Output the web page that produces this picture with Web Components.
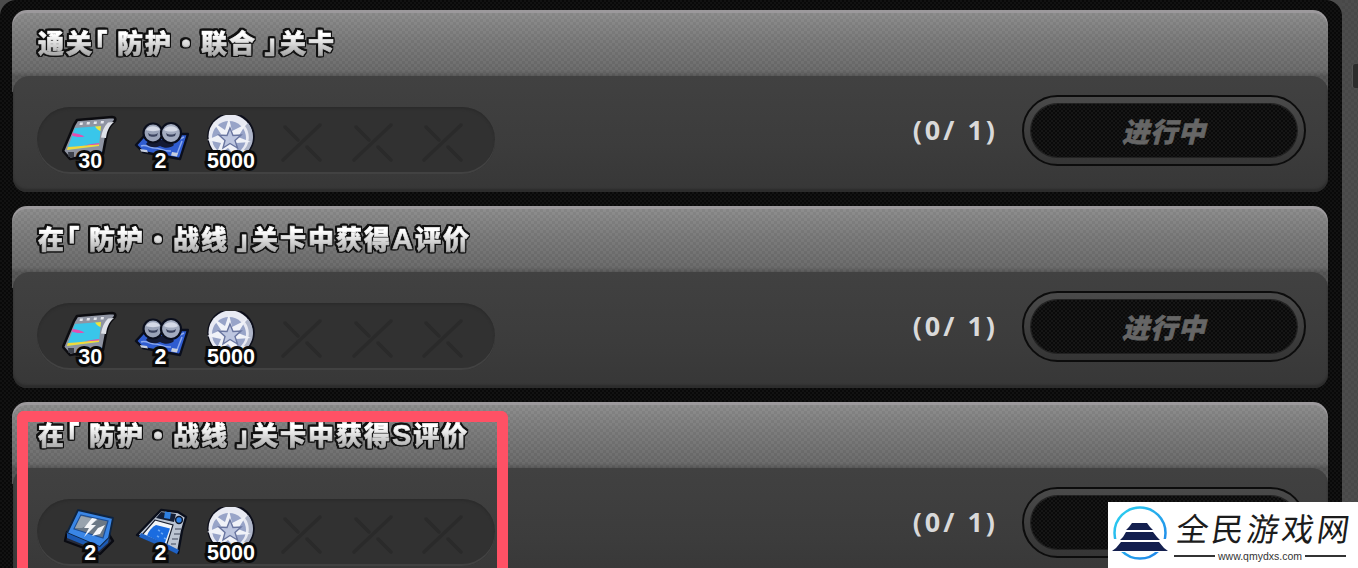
<!DOCTYPE html>
<html lang="zh">
<head>
<meta charset="utf-8">
<title>任务</title>
<style>
    html, body { margin: 0; height: 568px; overflow: hidden; background: #4b4b4b; }
    body { display: flex; font-family: "Noto Sans CJK SC", "Noto Sans", sans-serif; position: relative; }
</style>
</head>
<body>
<quest-panel>
    <quest-card progress="(0/ 1)" label="进行中">
        <span slot="title">通关「 防护・联合 」关卡</span>
        <reward-item kind="film" count="30"></reward-item>
        <reward-item kind="reel" count="2"></reward-item>
        <reward-item kind="coin" count="5000"></reward-item>
    </quest-card>
    <quest-card progress="(0/ 1)" label="进行中">
        <span slot="title">在「 防护・战线 」关卡中获得A评价</span>
        <reward-item kind="film" count="30"></reward-item>
        <reward-item kind="reel" count="2"></reward-item>
        <reward-item kind="coin" count="5000"></reward-item>
    </quest-card>
    <quest-card progress="(0/ 1)" label="进行中">
        <span slot="title">在「 防护・战线 」关卡中获得S评价</span>
        <reward-item kind="chip" count="2"></reward-item>
        <reward-item kind="device" count="2"></reward-item>
        <reward-item kind="coin" count="5000"></reward-item>
    </quest-card>
</quest-panel>
<panel-scroll></panel-scroll>
<mark-box></mark-box>
<site-badge></site-badge>

<script>
const CHECKER = 'repeating-conic-gradient(rgba(0,0,0,.045) 0 25%, rgba(255,255,255,.02) 0 50%) 0 0 / 6px 6px';

class QuestPanel extends HTMLElement {
    constructor() {
        super();
        this.attachShadow({ mode: 'open' });
        this.shadowRoot.innerHTML = `
        <style>
            :host {
                display: flex;
                flex-direction: column;
                gap: 14px;
                box-sizing: border-box;
                width: 1342px;
                height: 568px;
                padding: 10px 14px 0 12px;
                background: repeating-conic-gradient(#090909 0 25%, #121212 0 50%) 0 0 / 4px 4px;
                border-radius: 16px 16px 0 0;
                overflow: hidden;
            }
        </style>
        <slot></slot>`;
    }
}

class PanelScroll extends HTMLElement {
    constructor() {
        super();
        this.attachShadow({ mode: 'open' });
        this.shadowRoot.innerHTML = `
        <style>
            :host {
                display: block;
                flex: 1;
                padding: 64px 0 0 11px;
                background: repeating-conic-gradient(#4d4d4d 0 25%, #484848 0 50%) 0 0 / 6px 6px;
            }
            .thumb {
                height: 24px;
                background: #2c2c2c;
                border-radius: 2px 0 0 2px;
                box-shadow: -1px 0 0 #555;
            }
        </style>
        <div class="thumb"></div>`;
    }
}

class QuestCard extends HTMLElement {
    constructor() {
        super();
        this.attachShadow({ mode: 'open' });
    }

    connectedCallback() {
        const titleText = this.querySelector('[slot=title]').textContent;
        const titleHtml = titleText
            .replace('・', '<span class="dot">・</span>')
            .replace(/[A-Z]/, '<span class="latin">$&</span>');
        const empties = 6 - this.querySelectorAll('reward-item').length;
        const crosses = Array.from({ length: empties }, () => `
            <svg class="cross" width="70" height="54" viewBox="0 0 70 54" fill="none" stroke="#2a2a2a" stroke-width="3.4" stroke-linecap="round">
                <path d="M54 11 17 46"/>
                <path d="M19 13 32 26M41 33 54 46"/>
            </svg>`).join('');

        this.shadowRoot.innerHTML = `
        <style>
            :host {
                display: block;
                flex: none;
                height: 182px;
            }
            .head {
                height: 82px;
                box-sizing: border-box;
                padding: 17px 0 0 26px;
                border-radius: 15px 15px 0 0;
                background: ${CHECKER}, linear-gradient(#8e8e8e, #7a7a7a 35%, #6a6a6a 74%, #555 81%);
                box-shadow: inset 0 3px 0 #9c999c;
                font-size: 26px;
                font-weight: 900;
                line-height: 30px;
                letter-spacing: 2px;
                font-feature-settings: "palt";
            }
            .title {
                display: inline-block;
                white-space: pre;
                color: transparent;
                -webkit-text-stroke: .7px transparent;
                background: linear-gradient(#ffffff 25%, #d4d4d4 60%, #adadad 90%);
                -webkit-background-clip: text;
                background-clip: text;
                filter: drop-shadow(1.6px 0 0 #111) drop-shadow(-1.6px 0 0 #111) drop-shadow(0 1.6px 0 #111) drop-shadow(0 -1.6px 0 #111);
            }
            .dot { font-feature-settings: normal; }
            .latin { font-family: "Liberation Sans", sans-serif; font-size: 29px; font-weight: 700; }
            .body {
                position: relative;
                height: 116px;
                box-sizing: border-box;
                margin: -16px 0 0 1px;
                display: flex;
                align-items: flex-start;
                padding: 31px 22px 0 24px;
                border-radius: 16px 16px 14px 14px;
                background: linear-gradient(#414141, #3c3c3c 60%, #373737);
                box-shadow: inset 0 -3px 2px #2c2c2c;
            }
            .tray {
                display: grid;
                grid-template-columns: repeat(6, 70.4px);
                width: 458px;
                height: 67px;
                box-sizing: border-box;
                padding-left: 18px;
                align-items: start;
                border-radius: 33px;
                background: #313131;
                box-shadow: inset 0 -2px 0 #424242, inset 0 2px 2px #2c2c2c;
            }
            .cross { margin-top: 7px; justify-self: center; }
            .progress {
                margin: -1px 24px 0 auto;
                color: #d9d9d9;
                font-family: "Open Sans", "Noto Sans", sans-serif;
                font-size: 27px;
                font-weight: 700;
                line-height: 48px;
                letter-spacing: 3px;
                white-space: pre;
            }
            .pill {
                width: 284px;
                height: 71px;
                box-sizing: border-box;
                margin-top: -12px;
                padding: 7px;
                border: 2px solid #0c0c0c;
                border-radius: 36px;
                background: linear-gradient(#4a4a4a, #353535);
            }
            .pill-in {
                height: 100%;
                display: flex;
                align-items: center;
                justify-content: center;
                border-radius: 27px;
                background: repeating-conic-gradient(#0a0a0a 0 25%, #161616 0 50%) 0 0 / 4px 4px;
                box-shadow: 0 0 0 1px #222;
                color: #666;
                -webkit-text-stroke: .6px #666;
                font-size: 27px;
                font-weight: 900;
                font-style: italic;
                letter-spacing: 1px;
            }
        </style>
        <div class="head"><span class="title">${titleHtml}</span></div>
        <div class="body">
            <div class="tray"><slot></slot>${crosses}</div>
            <div class="progress">${this.getAttribute('progress')}</div>
            <div class="pill"><div class="pill-in">${this.getAttribute('label')}</div></div>
        </div>`;
    }
}

const ICONS = {
    film: `
        <path d="M15 5 50 2c4 0 4 3 2 5-5 4-7 9-8 16l-3 16c-11 1-22 3-33 5l-7-8L12 10z" fill="#8f94a2" stroke="#0c0c10" stroke-width="2.600" stroke-linejoin="round"/>
        <path d="M44 23c1-7 3-12 8-16l-6 .500c-4 4-6 9-7 15z" fill="#dfe2e9"/>
        <path d="M13 13 39 11 37 31 5 35z" fill="#39c6ea"/>
        <path d="M33 11.400 39 11 38.500 16C36 15 34.500 13.500 33 11.400z" fill="#f0e23c"/>
        <path d="M10.500 18c5 .5 9 1.500 12 3.500-5 1-9 .5-12.500-1z" fill="#e34fb0"/>
        <path d="M5.800 32c10-.5 21-2 31.400-3.500L37 31 5 35z" fill="#f2d93a"/>
        <path d="M22 30.500c5-1 10-2 15-2.500l-.2 1.500z" fill="#d752b5"/>
        <path d="M18 7.500h3l-.5 2.500h-3zM25 7h3l-.5 2.500h-3zM32 6.500h3l-.5 2.500h-3zM39 6h3l-.5 2.500h-3z" fill="#e4e6ec"/>
        <path d="M6 37h6v5H6.500z" fill="#3e424c"/>`,
    reel: `
        <path d="M3 30 13 19H55L47 44 31 41 25 40 10 37z" fill="#2f5cd0" stroke="#0a0e1c" stroke-width="2.400" stroke-linejoin="round"/>
        <path d="M8 31c5-2 9 2 14 2s10 4 16 3M47 24l4-2M44 39l5-13" fill="none" stroke="#8aa8ee" stroke-width="1.500"/>
        <path d="M7 34l7 1 1 2.500-7-1zM39 37l6 1-1 3.500-6-1z" fill="#c6cede"/>
        <path d="M13 29c4 4 10 4 14 2 5 3 11 2 14-1l-3-5H16z" fill="#141a34"/>
        <circle cx="20" cy="18" r="9.500" fill="#9aa3b8" stroke="#0a0e1c" stroke-width="2.200"/>
        <circle cx="38" cy="18" r="10" fill="#a3acc0" stroke="#0a0e1c" stroke-width="2.200"/>
        <path d="M13 15c2-5 12-5 14 0-3 1.500-11 1.500-14 0zM31 15c2-5 12-5 14 0-3 2-11 2-14 0z" fill="#d4d9e6"/>
        <path d="M15 18c3 2 7 2 10 0l-1 3c-2 1-6 1-8 0zM33 18c3 2 7 2 10 0l-1 3c-2 1-6 1-8 0z" fill="#3d4560"/>`,
    coin: `
        <circle cx="28" cy="21.500" r="23.800" fill="#0c0e1a"/>
        <circle cx="27.500" cy="21.500" r="22" fill="#e8eaf3"/>
        <path d="M45 8a22 22 0 0 1-1 29l-3-2a19 19 0 0 0 1-24z" fill="#aeb5c9"/>
        <circle cx="26" cy="23" r="17" fill="#98a4c8"/>
        <path d="M26 3 29 16 43 9 35 22 48 27 33 28 35 44 25 33 12 42 18 28 4 25 18 19 10 7 22 15z" fill="#f0f2f8"/>
        <path d="M27 13 30 20.500 38 20 32 25.500 34.500 33 27 28.500 20 33 22 25.500 16 20 24 20.500z" fill="#bdc6e0" stroke="#6a76a0" stroke-width="1.400"/>`,
    chip: `
        <path d="M5 25 3 34 38 47 51 34 46 26z" fill="#262a38" stroke="#0a0b12" stroke-width="2.400" stroke-linejoin="round"/>
        <path d="M16 3 51 11 47 31 38 40 5 26z" fill="#3a86e6" stroke="#0f2440" stroke-width="1.800" stroke-linejoin="round"/>
        <path d="M5 26 38 40 47 31 46 36 37 44 5 31z" fill="#1c5ab4"/>
        <path d="M19 8 46 14 41 31 12 22z" fill="#6b7886" stroke="#1d4e94" stroke-width="1.200"/>
        <path d="M19 9 36 13 20 21 13 21z" fill="#98a3ae"/>
        <path d="M30 11 22 21 27 21 22 30 34 18 29 18 35 12zM36 21 43 18 38 27 30 29z" fill="#f4f6f9"/>`,
    device: `
        <path d="M28 3 45 5 53 10 49 24 45 46 36 41 4 28z" fill="#bcc5d3" stroke="#0a0e1a" stroke-width="2.400" stroke-linejoin="round"/>
        <path d="M28 5 43 7 41 15 23 11z" fill="#141e34"/>
        <path d="M32 4.500 38 5.500 37 12 31 11z" fill="#2e7fe0"/>
        <circle cx="46" cy="13" r="3.400" fill="#2e7fe0" stroke="#121a2c" stroke-width="1.500"/>
        <path d="M22 13 40 18 33 40 9 28z" fill="#f1f4f8" stroke="#1a2030" stroke-width="1.200"/>
        <path d="M23 18 37 21.500 31.500 37 14 28.500c2-5 5-8.500 9-10.500z" fill="#1a6ce0"/>
        <path d="M28 26l2 1M24 29l2 1M31 31l2 1M25 23l2 1" stroke="#6aa8f4" stroke-width="1.500"/>
        <path d="M6 30 34 42 44 47 46 43 36 38 8 26z" fill="#1f62c4"/>
        <path d="M42 22h6M41 27h6M39 32h6M38 37h5" stroke="#7c8596" stroke-width="2"/>`
};

class RewardItem extends HTMLElement {
    constructor() {
        super();
        this.attachShadow({ mode: 'open' });
    }

    connectedCallback() {
        this.shadowRoot.innerHTML = `
        <style>
            :host {
                display: block;
                position: relative;
                height: 67px;
            }
            svg {
                display: block;
                margin: 8px auto 0;
            }
            .count {
                position: absolute;
                left: 0;
                right: 0;
                top: 42px;
                text-align: center;
                font-family: "Liberation Sans", Arimo, sans-serif;
                font-size: 21.5px;
                font-weight: 700;
                line-height: 24px;
                color: #fff;
                -webkit-text-stroke: 6px #0a0a0a;
                paint-order: stroke fill;
            }
        </style>
        <svg width="56" height="50" viewBox="0 0 56 50">${ICONS[this.getAttribute('kind')]}</svg>
        <div class="count">${this.getAttribute('count')}</div>`;
    }
}

class MarkBox extends HTMLElement {
    constructor() {
        super();
        this.attachShadow({ mode: 'open' });
        this.shadowRoot.innerHTML = `
        <style>
            :host {
                position: absolute;
                left: 17px;
                top: 411px;
                width: 491px;
                height: 157px;
                box-sizing: border-box;
                border: 11.500px solid #ff5165;
                border-bottom: 0;
                border-radius: 7px 7px 0 0;
            }
        </style>`;
    }
}

class SiteBadge extends HTMLElement {
    constructor() {
        super();
        this.attachShadow({ mode: 'open' });
        this.shadowRoot.innerHTML = `
        <style>
            :host {
                position: absolute;
                left: 1108px;
                top: 502px;
                width: 250px;
                height: 66px;
                box-sizing: border-box;
                display: flex;
                align-items: flex-start;
                background: #fff;
                padding: 4px 0 0 3px;
            }
            .brand {
                margin-left: 5px;
                display: flex;
                flex-direction: column;
                width: 172px;
            }
            .name {
                font-family: "Noto Sans CJK SC", sans-serif;
                font-size: 32px;
                font-weight: 400;
                line-height: 42px;
                letter-spacing: 3.2px;
                color: #1c1c1c;
                white-space: nowrap;
                transform: skewX(-8deg);
                transform-origin: left bottom;
            }
            .url {
                display: flex;
                align-items: center;
                gap: 3px;
                margin-top: 1px;
                font-family: "Liberation Sans", sans-serif;
                font-size: 10.500px;
                line-height: 14px;
                color: #333;
            }
            .url i { flex: 1; height: 2px; background: #333; }
        </style>
        <svg width="58" height="58" viewBox="0 0 58 58">
            <defs>
                <linearGradient id="ring" x1="0" y1="0" x2="1" y2="1">
                    <stop offset="0" stop-color="#2cd3f0"/>
                    <stop offset="1" stop-color="#1f7fe8"/>
                </linearGradient>
            </defs>
            <circle cx="29" cy="27" r="25.500" fill="none" stroke="url(#ring)" stroke-width="2.500"/>
            <rect x="0" y="33" width="58" height="13" fill="#fff"/>
            <path d="M21 17H36L39 21 42 24H15L18 21z" fill="#14204f"/>
            <path d="M15 26H42L46 31 49 34H9L12 31z" fill="#14204f"/>
            <path d="M10 36H48L53 42 57 45H1L5 42z" fill="#14204f"/>
        </svg>
        <div class="brand">
            <div class="name">全民游戏网</div>
            <div class="url"><i></i><span>www.qmydxs.com</span><i></i></div>
        </div>`;
    }
}

customElements.define('quest-panel', QuestPanel);
customElements.define('panel-scroll', PanelScroll);
customElements.define('quest-card', QuestCard);
customElements.define('reward-item', RewardItem);
customElements.define('mark-box', MarkBox);
customElements.define('site-badge', SiteBadge);
</script>
</body>
</html>
